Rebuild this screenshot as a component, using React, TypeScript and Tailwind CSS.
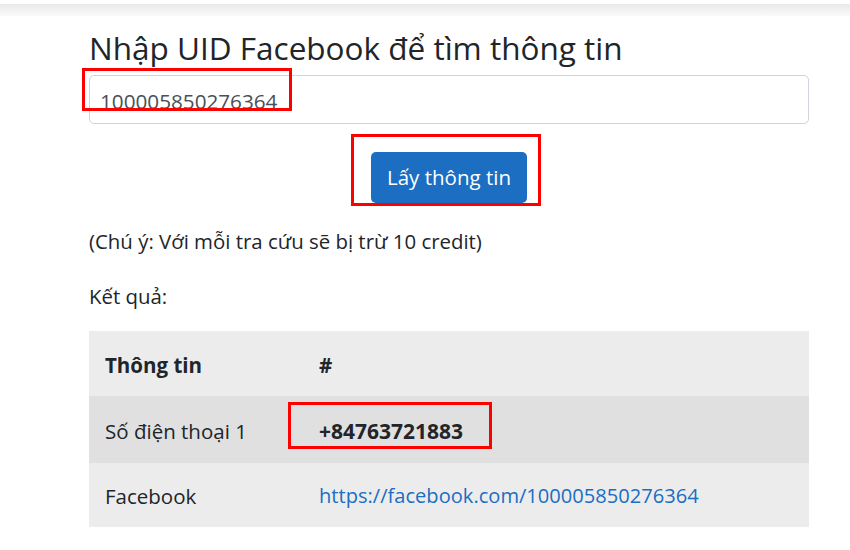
import React from "react";

export default function App() {
  return (
    <div
      className="relative w-[850px] h-[550px] overflow-hidden bg-white text-[#212529]"
      style={{ fontFamily: '"Open Sans", "Noto Sans", sans-serif' }}
    >
      <div className="h-[4px] bg-white" />
      <div className="h-[12px] bg-gradient-to-b from-[#e9e9e9] to-[#fafafa]" />
      <div className="ml-[89px] w-[720px]">
        <h1 className="mt-[12px] h-[44px] text-[31.5px] leading-[40px] font-normal">
          Nhập UID Facebook để tìm thông tin
        </h1>
        <div className="relative mt-[3px]">
          <div className="flex h-[49px] items-center rounded-[5px] border border-[#ced4da] bg-white px-[10px] pt-[4px] text-[20.7px] text-[#495057]">
            100005850276364
          </div>
          <div className="absolute left-[-7px] top-[-7px] h-[43px] w-[210px] border-[3px] border-[#ff0000]" />
        </div>
        <div className="flex justify-center">
          <div className="relative mt-[28px]">
            <button className="h-[51px] w-[156px] rounded-[5px] bg-[#1b6ec2] text-[20.5px] text-white">
              Lấy thông tin
            </button>
            <div className="absolute left-[-20px] top-[-18px] h-[72px] w-[190px] border-[3px] border-[#ff0000]" />
          </div>
        </div>
        <p className="mt-[25px] text-[20.4px] leading-[27px]">
          (Chú ý: Với mỗi tra cứu sẽ bị trừ 10 credit)
        </p>
        <p className="mt-[28px] text-[20.4px] leading-[27px]">Kết quả:</p>
        <div className="mt-[21px] w-[720px] text-[20.5px]">
          <div className="flex h-[65px] items-center bg-[#ececec] pt-[3px]">
            <div className="w-[230px] pl-[16px] font-bold">Thông tin</div>
            <div className="font-bold">#</div>
          </div>
          <div className="relative flex h-[67px] items-center bg-[#e0e0e0] pt-[3px]">
            <div className="w-[230px] pl-[16px]">Số điện thoại 1</div>
            <div className="font-bold text-[21px] pt-[1px]">+84763721883</div>
            <div className="absolute left-[199px] top-[6px] h-[47px] w-[204px] border-[3px] border-[#ff0000]" />
          </div>
          <div className="flex h-[64px] items-center bg-[#ececec] pt-[3px]">
            <div className="w-[230px] pl-[16px]">Facebook</div>
            <a className="text-[20.1px] text-[#1b6ec2]" href="#">
              https://facebook.com/100005850276364
            </a>
          </div>
        </div>
      </div>
    </div>
  );
}
